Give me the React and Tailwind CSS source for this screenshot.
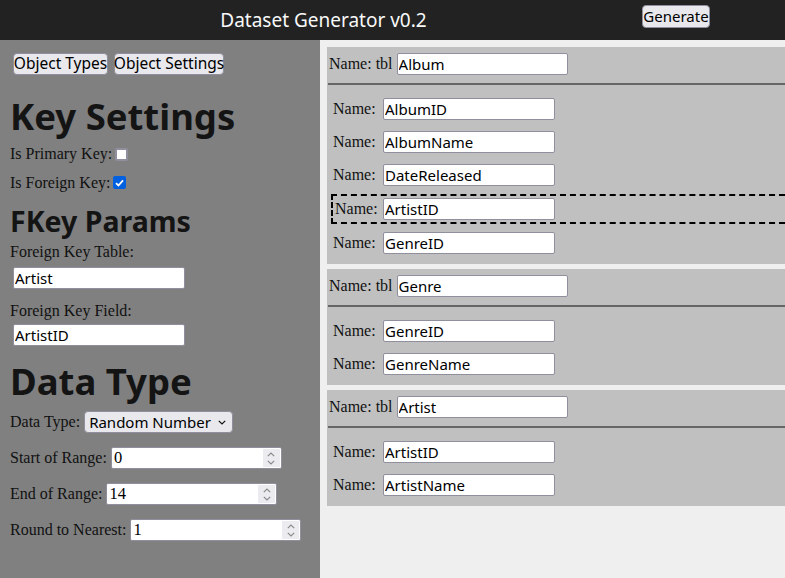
import React from "react";

const SANS = "font-['Noto_Sans',sans-serif]";
const SERIF = "font-['Liberation_Serif',serif]";

function TextBox({ value, wide }) {
  return (
    <input
      readOnly
      value={value}
      className={
        (wide ? "w-[171px] " : "w-[172px] ") +
        "block h-[22px] bg-white border border-[#8f8f9d] rounded-[2px] px-[1px] text-[15px] leading-[20px] text-black outline-none " +
        SANS
      }
    />
  );
}

function Chevron({ up, color = "#8a8a8a" }) {
  return (
    <svg width="8" height="5" viewBox="0 0 8 5" fill="none">
      <path
        d={up ? "M0.8 4.2 L4 1 L7.2 4.2" : "M0.8 0.8 L4 4 L7.2 0.8"}
        stroke={color}
        strokeWidth="1.2"
      />
    </svg>
  );
}

function NumberBox({ value }) {
  return (
    <div className="flex h-[22px] w-[171px] items-stretch bg-white border border-[#8f8f9d] rounded-[2px] p-[1px]">
      <span className={"flex-1 pl-[1px] text-[16.5px] leading-[18px] text-black " + SERIF}>{value}</span>
      <div className="flex w-[17px] flex-col items-center justify-center gap-[3px] bg-[#ececf0]">
        <Chevron up />
        <Chevron />
      </div>
    </div>
  );
}

function Check({ checked }) {
  if (checked) {
    return (
      <div className="ml-[3px] flex h-[13px] w-[13px] items-center justify-center rounded-[2px] bg-[#0060df]">
        <svg width="9" height="8" viewBox="0 0 9 8" fill="none">
          <path d="M1 4.2 L3.4 6.5 L8 1.3" stroke="white" strokeWidth="1.8" />
        </svg>
      </div>
    );
  }
  return (
    <div className="ml-[3px] h-[13px] w-[13px] rounded-[2px] border-2 border-[#8f8f9d] bg-white" />
  );
}

function Btn({ children, cls }) {
  return (
    <div
      className={
        "flex h-[22px] items-center justify-center rounded-[4px] border border-[#8f8f9d] bg-[#e9e9ed] text-black whitespace-nowrap " +
        SANS +
        " " +
        cls
      }
    >
      {children}
    </div>
  );
}

function Row({ name, dashed }) {
  if (dashed) {
    return (
      <div className="-my-[3px] ml-[4px] flex items-center border-2 border-r-0 border-dashed border-black py-[2px] pl-[2px]">
        <span className={"w-[48px] text-[16px] leading-[18px] text-[#111] " + SERIF}>Name:</span>
        <TextBox value={name} />
      </div>
    );
  }
  return (
    <div className="flex h-[22px] items-center pl-[6px]">
      <span className={"w-[50px] text-[16px] leading-[18px] text-[#111] " + SERIF}>Name:</span>
      <TextBox value={name} />
    </div>
  );
}

function Card({ table, fields, dashedIndex }) {
  return (
    <div className="bg-[#c0c0c0] pt-[6px] pb-[10px]">
      <div className="flex h-[22px] items-center pl-[2px]">
        <span className={"text-[16px] leading-[18px] text-[#111] " + SERIF}>Name: tbl</span>
        <div className="ml-[4px] flex">
          <TextBox value={table} wide />
        </div>
      </div>
      <div className="ml-[1px] mt-[8px] h-[2px] bg-[#666666]" />
      <div className="mt-[13px] flex flex-col gap-[11px]">
        {fields.map((f, i) => (
          <Row key={i} name={f} dashed={i === dashedIndex} />
        ))}
      </div>
    </div>
  );
}

export default function App() {
  const heading = "text-[#141414] font-bold " + SANS;
  const label = "text-[16px] leading-[18px] text-[#111] " + SERIF;
  return (
    <div className="h-[578px] w-[785px] overflow-hidden bg-[#efefef]">
      <header className="flex h-[40px] items-center bg-[#222222]">
        <div className={"w-[642px] pl-[5px] text-center text-[19px] leading-[28px] text-[#f8f8f8] " + SANS}>
          Dataset Generator v0.2
        </div>
        <Btn cls="w-[68px] h-[23px] self-start mt-[5px] text-[15px]">Generate</Btn>
      </header>
      <div className="flex h-[538px]">
        <aside className="w-[320px] shrink-0 bg-[#808080] pl-[10px] pt-[13px]">
          <div className="ml-[3px] flex gap-[6px]">
            <Btn cls="w-[95px] text-[15.5px]">Object Types</Btn>
            <Btn cls="w-[110px] text-[15.5px]">Object Settings</Btn>
          </div>
          <h1 className={"mt-[21px] text-[36.5px] leading-[40px] " + heading}>Key Settings</h1>
          <div className="mt-[4px] flex h-[28px] items-center">
            <span className={label}>Is Primary Key:</span>
            <Check />
          </div>
          <div className="flex h-[29px] items-center">
            <span className={label}>Is Foreign Key:</span>
            <Check checked />
          </div>
          <h2 className={"mt-[8px] text-[28.5px] leading-[32px] " + heading}>FKey Params</h2>
          <div className={"mt-[6px] " + label}>Foreign Key Table:</div>
          <div className="ml-[3px] mt-[6px] flex">
            <TextBox value="Artist" />
          </div>
          <div className={"mt-[13px] " + label}>Foreign Key Field:</div>
          <div className="ml-[3px] mt-[4px] flex">
            <TextBox value="ArtistID" />
          </div>
          <h1 className={"mt-[15px] text-[36.5px] leading-[40px] " + heading}>Data Type</h1>
          <div className="mt-[10px] flex h-[22px] items-center gap-[4px]">
            <span className={label}>Data Type:</span>
            <div
              className={
                "flex h-[22px] w-[149px] items-center justify-between rounded-[4px] border border-[#8f8f9d] bg-[#e9e9ed] pl-[4px] pr-[6px] text-[15px] text-black " +
                SANS
              }
            >
              <span>Random Number</span>
              <Chevron color="#111" />
            </div>
          </div>
          <div className="mt-[14px] flex h-[22px] items-center gap-[4px]">
            <span className={label}>Start of Range:</span>
            <NumberBox value="0" />
          </div>
          <div className="mt-[14px] flex h-[22px] items-center gap-[4px]">
            <span className={label}>End of Range:</span>
            <NumberBox value="14" />
          </div>
          <div className="mt-[14px] flex h-[22px] items-center gap-[4px]">
            <span className={label}>Round to Nearest:</span>
            <NumberBox value="1" />
          </div>
        </aside>
        <main className="flex flex-1 flex-col gap-[5px] overflow-hidden bg-[#efefef] pl-[7px] pt-[7px]">
          <Card
            table="Album"
            fields={["AlbumID", "AlbumName", "DateReleased", "ArtistID", "GenreID"]}
            dashedIndex={3}
          />
          <Card table="Genre" fields={["GenreID", "GenreName"]} />
          <Card table="Artist" fields={["ArtistID", "ArtistName"]} />
        </main>
      </div>
    </div>
  );
}
